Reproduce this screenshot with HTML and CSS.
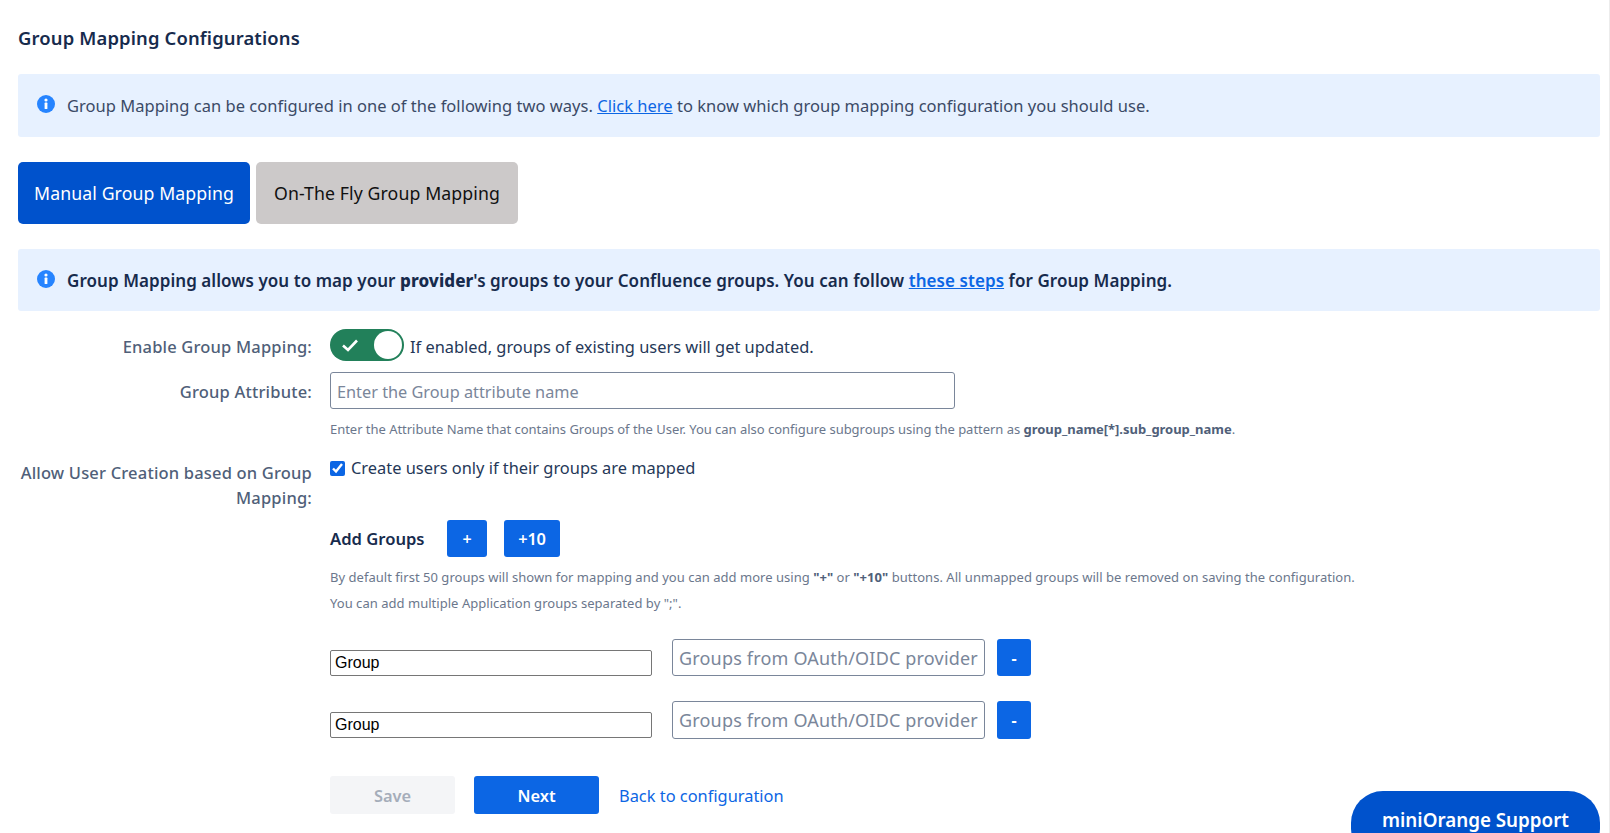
FILE: index.html
```html
<!DOCTYPE html>
<html lang="en">
<head>
<meta charset="utf-8">
<title>Group Mapping Configurations</title>
<link rel="stylesheet" href="styles.css">
</head>
<body>
<main class="page">
  <h1 class="title">Group Mapping Configurations</h1>
  <div class="banner">
    <svg class="info" viewBox="0 0 18 18"><circle cx="9" cy="9" r="9" fill="#2684ff"/><rect x="7.6" y="7.6" width="2.8" height="6.4" rx=".6" fill="#fff"/><circle cx="9" cy="5" r="1.6" fill="#fff"/></svg>
    <p class="banner-text">Group Mapping can be configured in one of the following two ways. <a href="#" class="link">Click here</a> to know which group mapping configuration you should use.</p>
  </div>
  <div class="tabs">
    <button class="tab tab-active">Manual Group Mapping</button>
    <button class="tab tab-idle">On-The Fly Group Mapping</button>
  </div>
  <div class="banner banner-second">
    <svg class="info" viewBox="0 0 18 18"><circle cx="9" cy="9" r="9" fill="#2684ff"/><rect x="7.6" y="7.6" width="2.8" height="6.4" rx=".6" fill="#fff"/><circle cx="9" cy="5" r="1.6" fill="#fff"/></svg>
    <p class="banner-text banner-strong">Group Mapping allows you to map your <b class="heavy">provider</b>'s groups to your Confluence groups. You can follow <a href="#" class="link">these steps</a> for Group Mapping.</p>
  </div>

  <div class="row row-toggle">
    <label class="label">Enable Group Mapping:</label>
    <div class="field inline">
      <span class="toggle">
        <svg class="toggle-check" viewBox="0 0 18 14"><path d="M2 7.5 L7 12 L16 2.5" fill="none" stroke="#fff" stroke-width="2.6"/></svg>
        <span class="toggle-knob"></span>
      </span>
      <span class="toggle-text">If enabled, groups of existing users will get updated.</span>
    </div>
  </div>
  <div class="row row-attr">
    <label class="label label-attr">Group Attribute:</label>
    <div class="field">
      <input class="text-input attr-input" type="text" placeholder="Enter the Group attribute name">
      <p class="help help-attr">Enter the Attribute Name that contains Groups of the User. You can also configure subgroups using the pattern as <b>group_name[*].sub_group_name</b>.</p>
    </div>
  </div>
  <div class="row row-allow">
    <label class="label label-allow">Allow User Creation based on Group Mapping:</label>
    <div class="field">
      <label class="check"><input class="checkbox" type="checkbox" checked> Create users only if their groups are mapped</label>
    </div>
  </div>

  <div class="indent">
    <div class="add-row">
      <span class="add-label">Add Groups</span>
      <button class="btn-blue btn-plus">+</button>
      <button class="btn-blue btn-ten">+10</button>
    </div>
    <p class="help help-add">By default first 50 groups will shown for mapping and you can add more using <b>"+"</b> or <b>"+10"</b> buttons. All unmapped groups will be removed on saving the configuration.<br>You can add multiple Application groups separated by ";".</p>

    <div class="map-row">
      <input class="group-input" type="text" value="Group">
      <input class="text-input map-input" type="text" placeholder="Groups from OAuth/OIDC provider">
      <button class="btn-blue btn-minus">-</button>
    </div>
    <div class="map-row map-row-second">
      <input class="group-input" type="text" value="Group">
      <input class="text-input map-input" type="text" placeholder="Groups from OAuth/OIDC provider">
      <button class="btn-blue btn-minus">-</button>
    </div>

    <div class="actions">
      <button class="btn-save" disabled>Save</button>
      <button class="btn-blue btn-next">Next</button>
      <a href="#" class="back">Back to configuration</a>
    </div>
  </div>
</main>
<button class="support">miniOrange Support</button>
</body>
</html>
```
FILE: styles.css
```css
* { box-sizing: border-box; }
html, body { height: 100%; }
body {
  margin: 0;
  overflow: hidden;
  background: #fff;
  color: #172b4d;
  font-family: "Noto Sans", "Open Sans", sans-serif;
  font-size: 16px;
  border-right: 1px solid #ececec;
}
.page { padding: 26px 9px 0 18px; }
.title { margin: 0 0 24px; height: 24px; line-height: 24px; font-size: 18.4px; font-weight: 600; letter-spacing: 0.15px; }
.banner { display: flex; align-items: center; height: 63px; padding-left: 19px; background: #e7f1ff; border-radius: 3px; }
.banner-second { height: 62px; }
.info { width: 18px; height: 18px; flex: none; margin: -3px 12px 0 0; }
.banner-text { margin: 0; font-size: 16.5px; color: #3b4a66; letter-spacing: 0.02px; white-space: nowrap; }
.banner-strong { font-size: 17px; font-weight: 600; color: #172b4d; letter-spacing: 0.06px; }
.heavy { font-weight: 800; }
.link { color: #0c66e4; }
.tabs { display: flex; gap: 6px; margin: 25px 0; }
.tab { height: 62px; border: 0; border-radius: 5px; font-family: inherit; font-size: 17.7px; letter-spacing: 0.1px; padding: 0; }
.tab-active { width: 232px; background: #0052cc; color: #fff; }
.tab-idle { width: 262px; background: #ccc9c9; color: #111; }

.row { display: flex; }
.label { flex: none; width: 294px; margin-right: 18px; text-align: right; font-size: 16.5px; font-weight: 500; color: #505f79; letter-spacing: 0.18px; }
.row-toggle { margin-top: 18px; height: 32px; }
.row-toggle .label { line-height: 36px; }
.inline { display: flex; align-items: center; }
.toggle { position: relative; display: flex; align-items: center; width: 74px; height: 32px; border-radius: 16px; background: #22805a; padding-left: 11px; margin-right: 6px; }
.toggle-check { width: 18px; height: 14px; }
.toggle-knob { position: absolute; top: 2px; right: 2px; width: 28px; height: 28px; border-radius: 50%; background: #fff; }
.toggle-text { font-size: 16.4px; color: #253858; position: relative; top: 1px; }
.row-attr { margin-top: 11px; }
.label-attr { line-height: 40px; }
.text-input { height: 37px; border: 1px solid #7a869a; border-radius: 3px; padding: 2px 6px 0; font-family: inherit; font-size: 16.3px; color: #172b4d; background: #fff; }
.text-input::placeholder { color: #7a869a; opacity: 1; }
.attr-input { display: block; width: 625px; }
.help { margin: 0; font-size: 13px; color: #6b778c; }
.help b { color: #505f79; font-weight: 700; }
.help-attr { margin-top: 12px; line-height: 16px; letter-spacing: -0.03px; white-space: nowrap; }
.row-allow { margin-top: 23px; height: 50px; }
.label-allow { line-height: 25px; }
.check { display: flex; align-items: center; gap: 6px; height: 14px; font-size: 16.4px; color: #253858; }
.checkbox { width: 15px; height: 15px; margin: 2px 0 0; accent-color: #0c66e4; flex: none; }

.indent { margin-left: 312px; }
.add-row { display: flex; align-items: center; margin-top: 10px; height: 37px; }
.add-label { width: 117px; font-size: 16.6px; font-weight: 600; color: #172b4d; }
.btn-blue { border: 0; border-radius: 3px; background: #0c66e4; color: #fff; font-family: inherit; padding: 0; }
.btn-plus { width: 40px; height: 37px; font-size: 16px; font-weight: 600; margin-right: 17px; }
.btn-ten { width: 56px; height: 37px; font-size: 16.4px; font-weight: 600; letter-spacing: -0.2px; }
.help-add { margin-top: 7px; line-height: 26px; letter-spacing: 0.03px; white-space: nowrap; }
.map-row { display: flex; align-items: flex-start; margin-top: 23px; height: 37px; }
.map-row-second { margin-top: 25px; height: 38px; }
.group-input { width: 322px; height: 26px; margin: 11px 20px 0 0; border: 1px solid #767676; border-radius: 2px; padding: 0 4px; font-family: "Liberation Sans", Arial, sans-serif; font-size: 16px; color: #000; background: #fff; }
.map-input { width: 313px; height: 100%; margin-right: 12px; font-size: 18px; letter-spacing: 0.18px; padding: 0 6px; }
.btn-minus { width: 34px; height: 100%; font-size: 16px; font-weight: 700; }
.actions { display: flex; align-items: center; margin-top: 37px; height: 38px; }
.btn-save { width: 125px; height: 38px; margin-right: 19px; border: 0; border-radius: 3px; background: #f4f5f7; color: #a5adba; font-family: inherit; font-size: 16.4px; font-weight: 600; padding: 0; }
.btn-next { width: 125px; height: 38px; margin-right: 20px; font-size: 16.4px; font-weight: 600; padding: 0; }
.back { color: #0c66e4; font-size: 16.4px; text-decoration: none; }
.support { position: fixed; left: 1351px; top: 791px; width: 249px; height: 70px; border: 0; border-radius: 32px; background: #0052cc; color: #fff; font-family: inherit; font-size: 18.8px; font-weight: 600; padding: 0 0 12px; }
```
